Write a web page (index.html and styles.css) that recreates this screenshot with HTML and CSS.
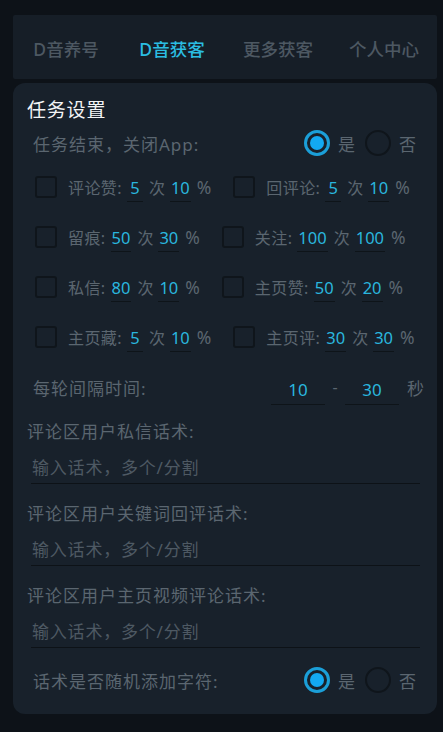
FILE: index.html
```html
<!DOCTYPE html>
<html lang="zh-CN">
<head>
  <meta charset="UTF-8">
  <meta name="viewport" content="width=device-width, initial-scale=1.0">
  <title>D音获客</title>
  <link rel="stylesheet" href="styles.css">
</head>
<body>
  <div class="app">
    <!-- 顶部标签 -->
    <div class="tabs">
      <div class="tab">D音养号</div>
      <div class="tab active">D音获客</div>
      <div class="tab">更多获客</div>
      <div class="tab">个人中心</div>
    </div>

    <div class="card">
      <div class="card-title">任务设置</div>

      <div class="radio-row">
        <div class="row-label">任务结束，关闭App:</div>
        <div class="radio-group">
          <span class="radio checked"></span><span class="radio-text">是</span>
          <span class="radio"></span><span class="radio-text">否</span>
        </div>
      </div>

      <div class="check-list">
        <div class="check-row">
          <div class="check-item">
            <span class="checkbox"></span>
            <span class="check-label">评论赞:</span>
            <span class="num">5</span><span class="unit">次</span><span class="num">10</span><span class="unit">%</span>
          </div>
          <div class="check-item">
            <span class="checkbox"></span>
            <span class="check-label">回评论:</span>
            <span class="num">5</span><span class="unit">次</span><span class="num">10</span><span class="unit">%</span>
          </div>
        </div>
        <div class="check-row">
          <div class="check-item">
            <span class="checkbox"></span>
            <span class="check-label">留痕:</span>
            <span class="num">50</span><span class="unit">次</span><span class="num">30</span><span class="unit">%</span>
          </div>
          <div class="check-item">
            <span class="checkbox"></span>
            <span class="check-label">关注:</span>
            <span class="num">100</span><span class="unit">次</span><span class="num">100</span><span class="unit">%</span>
          </div>
        </div>
        <div class="check-row">
          <div class="check-item">
            <span class="checkbox"></span>
            <span class="check-label">私信:</span>
            <span class="num">80</span><span class="unit">次</span><span class="num">10</span><span class="unit">%</span>
          </div>
          <div class="check-item">
            <span class="checkbox"></span>
            <span class="check-label">主页赞:</span>
            <span class="num">50</span><span class="unit">次</span><span class="num">20</span><span class="unit">%</span>
          </div>
        </div>
        <div class="check-row">
          <div class="check-item">
            <span class="checkbox"></span>
            <span class="check-label">主页藏:</span>
            <span class="num">5</span><span class="unit">次</span><span class="num">10</span><span class="unit">%</span>
          </div>
          <div class="check-item">
            <span class="checkbox"></span>
            <span class="check-label">主页评:</span>
            <span class="num">30</span><span class="unit">次</span><span class="num">30</span><span class="unit">%</span>
          </div>
        </div>
      </div>

      <div class="interval-row">
        <div class="row-label">每轮间隔时间:</div>
        <div class="interval">
          <span class="range-num">10</span>
          <span class="dash">-</span>
          <span class="range-num">30</span>
          <span class="sec">秒</span>
        </div>
      </div>

      <div class="field">
        <div class="field-label">评论区用户私信话术:</div>
        <div class="field-input">输入话术，多个/分割</div>
      </div>
      <div class="field">
        <div class="field-label">评论区用户关键词回评话术:</div>
        <div class="field-input">输入话术，多个/分割</div>
      </div>
      <div class="field">
        <div class="field-label">评论区用户主页视频评论话术:</div>
        <div class="field-input">输入话术，多个/分割</div>
      </div>

      <div class="radio-row last">
        <div class="row-label">话术是否随机添加字符:</div>
        <div class="radio-group">
          <span class="radio checked"></span><span class="radio-text">是</span>
          <span class="radio"></span><span class="radio-text">否</span>
        </div>
      </div>
    </div>
  </div>
</body>
</html>
```

FILE: styles.css
```css
* {
  margin: 0;
  padding: 0;
  box-sizing: border-box;
}

body {
  background: #0d1218;
  height: 100vh;
  overflow: hidden;
  font-family: "Noto Sans", "Noto Sans CJK SC", sans-serif;
  color: #5b6670;
}

.app {
  padding: 15px 6px 0 13px;
}

/* 顶部标签 */
.tabs {
  height: 64px;
  display: flex;
  align-items: center;
  background: #161e27;
  border-radius: 2px;
}

.tab {
  flex: 1;
  text-align: center;
  font-size: 17.5px;
  font-weight: 500;
  color: #4d5862;
  padding-top: 2px;
}

.tab.active {
  color: #2bbde2;
}

/* 设置卡片 */
.card {
  margin-top: 4px;
  height: 631px;
  background: #18212b;
  border-radius: 12px;
  padding: 13px 17px 0 14px;
}

.card-title {
  font-size: 19px;
  line-height: 28px;
  color: #f2f4f6;
  letter-spacing: 0.8px;
}

.row-label {
  font-size: 17px;
  letter-spacing: 1px;
}

.radio-row {
  height: 38px;
  display: flex;
  align-items: center;
  justify-content: space-between;
  padding: 0 4px 0 6px;
}

.radio-row.last {
  height: 64px;
}

.radio-group {
  display: flex;
  align-items: center;
}

.radio {
  width: 26px;
  height: 26px;
  border-radius: 50%;
  border: 2.5px solid #0f151b;
  display: flex;
  align-items: center;
  justify-content: center;
}

.radio.checked {
  border: 3px solid #1b9fd8;
}

.radio.checked::after {
  content: "";
  width: 14px;
  height: 14px;
  border-radius: 50%;
  background: #13a9f2;
}

.radio-text {
  font-size: 17px;
  margin: 0 10px 0 8px;
}

.radio-text:last-child {
  margin-right: 0;
}

/* 勾选项 */
.check-row {
  height: 50px;
  display: flex;
  align-items: center;
  gap: 22px;
  padding-left: 8px;
}

.check-item {
  display: flex;
  align-items: center;
}

.checkbox {
  width: 22px;
  height: 22px;
  border: 2.5px solid #0f151b;
  border-radius: 3px;
  margin-right: 11px;
}

.check-label {
  font-size: 16px;
  letter-spacing: 0.4px;
}

.num {
  color: #2ab6de;
  font-size: 16.5px;
  min-width: 16px;
  text-align: center;
  padding: 0 1px 2px;
  margin: 4px 6px 0 5px;
  border-bottom: 1.5px solid #0e1419;
}

.unit {
  font-size: 16px;
}

.unit:last-child {
  font-size: 17.5px;
}

/* 间隔时间 */
.interval-row {
  height: 50px;
  display: flex;
  align-items: center;
  justify-content: space-between;
  padding: 0 0 0 6px;
  margin-right: -4px;
}

.interval {
  display: flex;
  align-items: center;
}

.range-num {
  width: 54px;
  text-align: center;
  color: #2ab6de;
  font-size: 17px;
  padding: 2px 0 3px;
  margin-top: 6px;
  border-bottom: 1.5px solid #0e1419;
}

.dash {
  width: 20px;
  text-align: center;
  font-size: 16px;
}

.sec {
  font-size: 17px;
  margin-left: 8px;
}

/* 话术输入 */
.field + .field {
  margin-top: 10px;
}

.field-label {
  height: 40px;
  line-height: 40px;
  font-size: 17px;
  letter-spacing: 1px;
}

.field-input {
  height: 32px;
  line-height: 32px;
  margin-left: 4px;
  padding-left: 1px;
  font-size: 17px;
  letter-spacing: 0.8px;
  color: #4e5963;
  border-bottom: 1.5px solid #0d1217;
}
```
